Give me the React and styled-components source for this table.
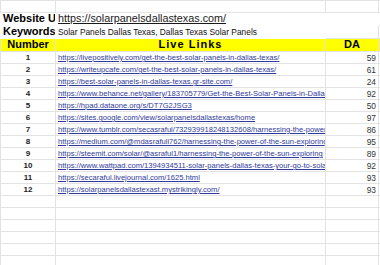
import styled, {createGlobalStyle} from "styled-components";

const GlobalStyle = createGlobalStyle`
  body {
    margin: 0;
    background: #ffffff;
    font-family: "Liberation Sans", Arial, sans-serif;
    overflow: hidden;
  }
`;

const links = [
    {n: 1, url: 'https://livepositively.com/get-the-best-solar-panels-in-dallas-texas/', da: 59},
    {n: 2, url: 'https://writeupcafe.com/get-the-best-solar-panels-in-dallas-texas/', da: 61},
    {n: 3, url: 'https://best-solar-panels-in-dallas-texas.gr-site.com/', da: 24},
    {n: 4, url: 'https://www.behance.net/gallery/183705779/Get-the-Best-Solar-Panels-in-Dallas-Texas', da: 92},
    {n: 5, url: 'https://hpad.dataone.org/s/DT7G2JSG3', da: 50},
    {n: 6, url: 'https://sites.google.com/view/solarpanelsdallastexas/home', da: 97},
    {n: 7, url: 'https://www.tumblr.com/secasraful/732939918248132608/harnessing-the-power', da: 86},
    {n: 8, url: 'https://medium.com/@mdasrafuli762/harnessing-the-power-of-the-sun-exploring', da: 95},
    {n: 9, url: 'https://steemit.com/solar/@asraful1/harnessing-the-power-of-the-sun-exploring', da: 89},
    {n: 10, url: 'https://www.wattpad.com/1394934511-solar-panels-dallas-texas-your-go-to-solar', da: 92},
    {n: 11, url: 'https://secaraful.livejournal.com/1625.html', da: 93},
    {n: 12, url: 'https://solarpanelsdallastexast.mystrikingly.com/', da: 93},
];

const Sheet = styled.table`
  border-collapse: collapse;
  table-layout: fixed;
  width: 380px;
`;

const Row = styled.tr`
  height: 12px;
  background: ${p => p.$head ? '#ffff00' : 'transparent'};
`;

const Cell = styled.td`
  height: 12px;
  padding: 0 2px;
  border: 1px solid ${p => p.$noBorder ? 'transparent' : '#e3e3e3'};
  box-sizing: border-box;
  white-space: nowrap;
  overflow: ${p => p.$spill ? 'visible' : 'hidden'};
  text-align: ${p => p.$align || 'left'};
  font-size: ${p => p.$size || 8}px;
  font-weight: ${p => p.$bold ? 700 : 400};
  color: ${p => p.$color || '#222'};
  line-height: 10px;
  vertical-align: bottom;
`;

const Title = styled.span`
  font-size: 11px;
  font-weight: 700;
  color: #000;
  line-height: 10px;
  letter-spacing: ${p => p.$wide ? '1px' : 'normal'};
`;

const Link = styled.span`
  color: ${p => p.$dark ? '#1a1a1a' : '#2f3a9c'};
  text-decoration: underline;
  font-size: ${p => p.$size || 7.6}px;
`;

const Plain = styled.span`
  font-size: 8.4px;
  color: #111;
`;

export default function App() {
    return (
        <>
            <GlobalStyle/>
            <Sheet>
                <colgroup>
                    <col style={{width: 55}}/>
                    <col style={{width: 270}}/>
                    <col style={{width: 53}}/>
                    <col style={{width: 2}}/>
                </colgroup>
                <tbody>
                <Row>
                    <Cell/><Cell/><Cell/><Cell/>
                </Row>
                <Row>
                    <Cell $noBorder><Title>Website URL</Title></Cell>
                    <Cell $noBorder $spill><Link $dark $size={10.8}>https://solarpanelsdallastexas.com/</Link></Cell>
                    <Cell $noBorder/>
                    <Cell/>
                </Row>
                <Row>
                    <Cell $noBorder><Title>Keywords</Title></Cell>
                    <Cell $noBorder $spill><Plain>Solar Panels Dallas Texas, Dallas Texas Solar Panels</Plain></Cell>
                    <Cell/>
                    <Cell/>
                </Row>
                <Row $head>
                    <Cell $align="center"><Title>Number</Title></Cell>
                    <Cell $align="center"><Title $wide>Live Links</Title></Cell>
                    <Cell $align="center"><Title>DA</Title></Cell>
                    <Cell/>
                </Row>
                {links.map(l => (
                    <Row key={l.n}>
                        <Cell $align="center" $bold $size={8}>{l.n}</Cell>
                        <Cell><Link>{l.url}</Link></Cell>
                        <Cell $align="right" $size={8.4} $color="#333">{l.da}</Cell>
                        <Cell/>
                    </Row>
                ))}
                {[0, 1, 2, 3, 4, 5].map(i => (
                    <Row key={'e' + i}>
                        <Cell/><Cell/><Cell/><Cell/>
                    </Row>
                ))}
                </tbody>
            </Sheet>
        </>
    );
}
